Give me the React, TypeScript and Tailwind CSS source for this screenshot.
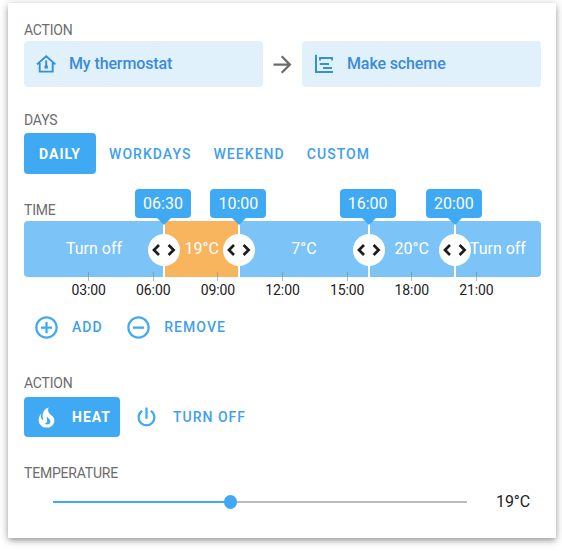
import type { ReactNode } from 'react';
import { MdAddCircleOutline, MdArrowForward, MdRemoveCircleOutline } from 'react-icons/md';

type Segment = { label: string; start: number; end: number; heat?: boolean };

const segments: Segment[] = [
  { label: 'Turn off', start: 0, end: 6.5 },
  { label: '19°C', start: 6.5, end: 10, heat: true },
  { label: '7°C', start: 10, end: 16 },
  { label: '20°C', start: 16, end: 20 },
  { label: 'Turn off', start: 20, end: 24 },
];

const handles = [
  { time: '06:30', hour: 6.5 },
  { time: '10:00', hour: 10 },
  { time: '16:00', hour: 16 },
  { time: '20:00', hour: 20 },
];

const ticks = ['03:00', '06:00', '09:00', '12:00', '15:00', '18:00', '21:00'];

const percent = (hour: number) => `${(hour / 24) * 100}%`;

function HomeThermometerIcon() {
  return (
    <svg viewBox="0 0 22 20" className="h-5 w-[22px]" fill="none" stroke="currentColor" strokeWidth="1.9">
      <path d="M2 10.4 11.2 2.3l9.2 8.1M4.7 9v8.6h13V9" />
      <path d="M11.2 6.4v6" />
      <circle cx="11.2" cy="12.9" r="1.9" fill="currentColor" stroke="none" />
    </svg>
  );
}

function SchemeIcon() {
  return (
    <svg viewBox="0 0 20 20" className="size-5" fill="none" stroke="currentColor" strokeWidth="2">
      <path d="M3 .8V18h17" />
      <path d="M7 6.4V4h12.2v2.4" strokeWidth="1.9" />
      <path d="M6.8 10h9.2M10 14h9" />
    </svg>
  );
}

function PowerIcon() {
  return (
    <svg viewBox="0 0 24 24" className="ml-[13px] size-[27px] fill-[#3fa9f4]">
      <path d="M16.56 5.44l-1.45 1.45A5.97 5.97 0 0 1 18 12a6 6 0 0 1-12 0c0-2.17 1.16-4.06 2.88-5.12L7.44 5.44A7.96 7.96 0 0 0 4 12a8 8 0 0 0 16 0c0-2.72-1.36-5.12-3.44-6.56M13 3h-2v10h2" />
    </svg>
  );
}

function FireIcon() {
  return (
    <svg viewBox="0 0 24 24" className="size-[27px] fill-white">
      <path d="M17.66 11.2C17.43 10.9 17.15 10.64 16.89 10.38C16.22 9.78 15.46 9.35 14.82 8.72C13.33 7.26 13 4.85 13.95 3C13 3.23 12.17 3.75 11.46 4.32C8.87 6.4 7.85 10.07 9.07 13.22C9.11 13.32 9.15 13.42 9.15 13.55C9.15 13.77 9 13.97 8.8 14.05C8.57 14.15 8.33 14.09 8.14 13.93C8.08 13.88 8.04 13.83 8 13.76C6.87 12.33 6.69 10.28 7.45 8.64C5.78 10 4.87 12.3 5 14.47C5.06 14.97 5.12 15.47 5.29 15.97C5.43 16.57 5.7 17.17 6 17.7C7.08 19.43 8.95 20.67 10.96 20.92C13.1 21.19 15.39 20.8 17.03 19.32C18.86 17.66 19.5 15 18.56 12.72L18.43 12.46C18.22 12 17.66 11.2 17.66 11.2M14.5 17.5C14.22 17.74 13.76 18 13.4 18.1C12.28 18.5 11.16 17.94 10.5 17.28C11.69 17 12.4 16.12 12.61 15.23C12.78 14.43 12.46 13.77 12.33 13C12.21 12.26 12.23 11.63 12.5 10.94C12.69 11.32 12.89 11.7 13.13 12C13.9 13 15.11 13.44 15.37 14.8C15.41 14.94 15.43 15.08 15.43 15.23C15.46 16.05 15.1 16.95 14.5 17.5Z" />
    </svg>
  );
}

function Label({ children }: { children: ReactNode }) {
  return <div className="h-5 text-sm leading-5 tracking-[-0.2px] text-[#6c6c6c]">{children}</div>;
}

function Choice({ icon, text }: { icon: ReactNode; text: string }) {
  return (
    <button className="flex h-[46px] w-[239px] shrink-0 items-center rounded bg-[#e1f1fc] pl-[11px] text-base font-medium tracking-[-0.12px] text-[#3a8bdb]">
      <span className="flex w-[34px] text-[#3390db]">{icon}</span>
      {text}
    </button>
  );
}

function Handle({ time, hour }: { time: string; hour: number }) {
  return (
    <div className="absolute top-0 flex h-full w-14 -translate-x-1/2 flex-col items-center" style={{ left: percent(hour) }}>
      <div className="absolute inset-y-0 w-0.5 bg-white" />
      <div className="absolute -top-8 h-[29px] w-14 -translate-x-px rounded bg-[#3fa9f4] text-center text-base leading-[29px] text-white">
        {time}
      </div>
      <svg viewBox="0 0 16 8" className="absolute -top-1 h-2 w-4 fill-[#3fa9f4]">
        <path d="M0 0h16L8 8z" />
      </svg>
      <div className="relative mt-[13px] flex size-8 items-center justify-center rounded-full bg-white">
        <svg viewBox="0 0 32 32" className="size-8" fill="none" stroke="#1c1c1c" strokeWidth="2.7">
          <path d="m11 11-5 5 5 5M20.6 11l5 5-5 5" />
        </svg>
      </div>
    </div>
  );
}

export default function App() {
  return (
    <main className="h-[551px] w-[562px] bg-white pt-[3px] pl-2 font-['Roboto','Liberation_Sans',sans-serif]">
      <section className="h-[535px] w-[548px] bg-white pt-[17px] pr-[15px] pl-4 shadow-[0_3px_5px_-1px_rgba(0,0,0,0.2),0_2px_8px_0_rgba(0,0,0,0.3)]">
        <Label>ACTION</Label>
        <div className="mt-px flex items-center">
          <Choice icon={<HomeThermometerIcon />} text="My thermostat" />
          <span className="flex w-[39px] justify-center text-[#6c6c6c]">
            <MdArrowForward size={27} />
          </span>
          <Choice icon={<SchemeIcon />} text="Make scheme" />
        </div>

        <div className="mt-[23px]">
          <Label>DAYS</Label>
          <div className="mt-[3px] flex h-[41px] items-center text-sm font-medium tracking-[1.05px] text-[#3fa0f2]">
            <button className="h-[41px] w-[72px] rounded bg-[#3fa9f4] font-bold text-white">DAILY</button>
            <button className="ml-[13px]">WORKDAYS</button>
            <button className="ml-[22px]">WEEKEND</button>
            <button className="ml-[22px]">CUSTOM</button>
          </div>
        </div>

        <div className="mt-[26px]">
          <Label>TIME</Label>
          <div className="relative mt-px h-14 w-[517px]">
            <div className="flex h-full overflow-hidden rounded text-base text-white">
              {segments.map((s) => (
                <div
                  key={s.start}
                  className={`flex items-center justify-center whitespace-nowrap ${s.heat ? 'bg-[#f9b55e]' : 'bg-[#7cc3f7]'}`}
                  style={{ width: percent(s.end - s.start) }}
                >
                  {s.label}
                </div>
              ))}
            </div>
            {ticks.map((t, i) => (
              <div
                key={t}
                className="absolute top-[51px] flex w-12 -translate-x-1/2 flex-col items-center text-sm leading-4 tracking-[-0.1px] text-[#222]"
                style={{ left: percent((i + 1) * 3) }}
              >
                <span className="h-[9px] w-px bg-[#6f8ca3]/60" />
                <span className="mt-px">{t}</span>
              </div>
            ))}
            {handles.map((h) => (
              <Handle key={h.time} {...h} />
            ))}
          </div>
        </div>

        <div className="mt-9 flex h-7 items-center text-sm font-medium tracking-[1.05px] text-[#3fa0f2]">
          <MdAddCircleOutline className="ml-[9px] text-[#3fa9f4]" size={27} />
          <button className="ml-3">ADD</button>
          <MdRemoveCircleOutline className="ml-[22px] text-[#3fa9f4]" size={27} />
          <button className="ml-[12.5px]">REMOVE</button>
        </div>

        <div className="mt-8">
          <Label>ACTION</Label>
          <div className="mt-1 flex h-10 items-center text-sm font-medium tracking-[1px] text-[#3fa0f2]">
            <button className="flex h-10 w-24 items-center rounded bg-[#3fa9f4] pl-[9px] font-bold text-white">
              <FireIcon />
              <span className="ml-3">HEAT</span>
            </button>
            <PowerIcon />
            <button className="ml-[13px]">TURN OFF</button>
          </div>
        </div>

        <div className="mt-[26px]">
          <Label>TEMPERATURE</Label>
          <div className="mt-[9px] flex h-5 items-center">
            <div className="relative ml-[29px] flex h-0.5 w-[414px] bg-[#bbb]">
              <div className="h-0.5 w-[178px] bg-[#3fa9f4]" />
              <div className="absolute -top-1.5 left-[171px] h-3.5 w-[13px] rounded-full bg-[#3fa9f4]" />
            </div>
            <span className="ml-[29px] text-base tracking-[-0.1px] text-[#222]">19°C</span>
          </div>
        </div>
      </section>
    </main>
  );
}
